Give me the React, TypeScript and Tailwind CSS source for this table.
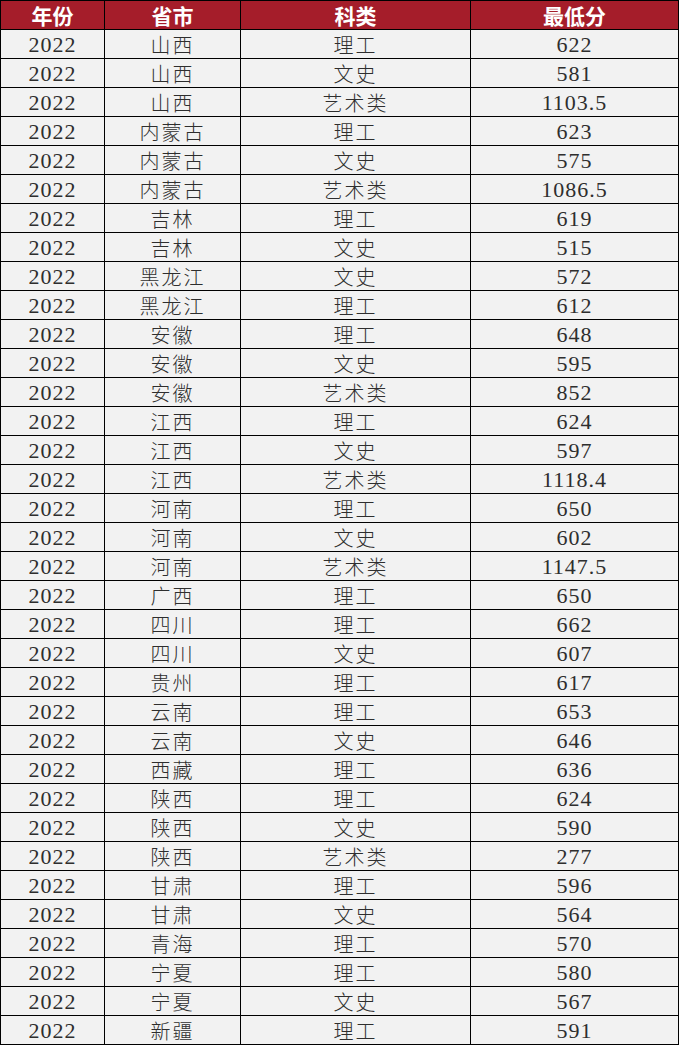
import React from "react";

const rows: [string, string, string][] = [
  ["山西", "理工", "622"],
  ["山西", "文史", "581"],
  ["山西", "艺术类", "1103.5"],
  ["内蒙古", "理工", "623"],
  ["内蒙古", "文史", "575"],
  ["内蒙古", "艺术类", "1086.5"],
  ["吉林", "理工", "619"],
  ["吉林", "文史", "515"],
  ["黑龙江", "文史", "572"],
  ["黑龙江", "理工", "612"],
  ["安徽", "理工", "648"],
  ["安徽", "文史", "595"],
  ["安徽", "艺术类", "852"],
  ["江西", "理工", "624"],
  ["江西", "文史", "597"],
  ["江西", "艺术类", "1118.4"],
  ["河南", "理工", "650"],
  ["河南", "文史", "602"],
  ["河南", "艺术类", "1147.5"],
  ["广西", "理工", "650"],
  ["四川", "理工", "662"],
  ["四川", "文史", "607"],
  ["贵州", "理工", "617"],
  ["云南", "理工", "653"],
  ["云南", "文史", "646"],
  ["西藏", "理工", "636"],
  ["陕西", "理工", "624"],
  ["陕西", "文史", "590"],
  ["陕西", "艺术类", "277"],
  ["甘肃", "理工", "596"],
  ["甘肃", "文史", "564"],
  ["青海", "理工", "570"],
  ["宁夏", "理工", "580"],
  ["宁夏", "文史", "567"],
  ["新疆", "理工", "591"],
];

const cols = ["w-[104px]", "w-[136px]", "w-[230px]", "w-[208px]"];

export default function App() {
  const headers = ["年份", "省市", "科类", "最低分"];
  return (
    <div className="w-[679px] bg-[#f2f2f2]">
      <div className="border-l border-t border-black">
        <div className="flex h-[29px] bg-[#a51d2a]">
          {headers.map((h, i) => (
            <div
              key={h}
              className={`${cols[i]} flex items-center justify-center border-r border-b border-black [font-family:Noto_Sans_CJK_SC,sans-serif] text-[21px] font-bold leading-none text-white`}
            >
              {h}
            </div>
          ))}
        </div>
        {rows.map((r, idx) => {
          const cells = ["2022", r[0], r[1], r[2]];
          return (
            <div key={idx} className="flex h-[29px]">
              {cells.map((c, i) => (
                <div
                  key={i}
                  className={`${cols[i]} flex items-center justify-center border-r border-b border-black pt-[2px] leading-none text-[#2e2e2e]`}
                >
                  {i === 1 || i === 2 ? (
                    <span className="[font-family:Noto_Sans_CJK_SC,sans-serif] text-[20px] font-light tracking-[2px]">
                      {c}
                    </span>
                  ) : (
                    <span className="[font-family:Liberation_Serif,DejaVu_Serif,serif] text-[22px] tracking-[1px]">
                      {c}
                    </span>
                  )}
                </div>
              ))}
            </div>
          );
        })}
      </div>
    </div>
  );
}
